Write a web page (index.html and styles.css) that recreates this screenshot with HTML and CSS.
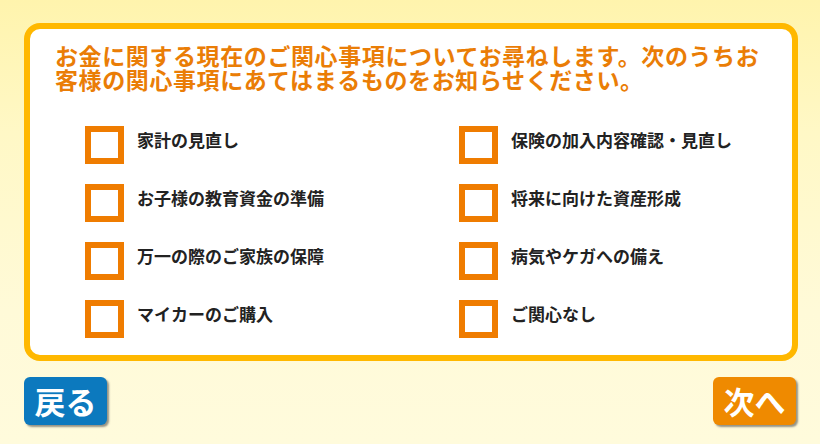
FILE: index.html
```html
<!DOCTYPE html>
<html lang="ja">
<head>
<meta charset="utf-8">
<title>ご関心事項</title>
<link rel="stylesheet" href="styles.css">
</head>
<body>
<div class="page">
  <section class="panel">
    <h1 class="title"><span class="title-line">お金に関する現在のご関心事項についてお尋ねします。次のうちお</span><span class="title-line">客様の関心事項にあてはまるものをお知らせください。</span></h1>
    <div class="options">
      <label class="option"><span class="box"></span><span class="text">家計の見直し</span></label>
      <label class="option"><span class="box"></span><span class="text">保険の加入内容確認・見直し</span></label>
      <label class="option"><span class="box"></span><span class="text">お子様の教育資金の準備</span></label>
      <label class="option"><span class="box"></span><span class="text">将来に向けた資産形成</span></label>
      <label class="option"><span class="box"></span><span class="text">万一の際のご家族の保障</span></label>
      <label class="option"><span class="box"></span><span class="text">病気やケガへの備え</span></label>
      <label class="option"><span class="box"></span><span class="text">マイカーのご購入</span></label>
      <label class="option"><span class="box"></span><span class="text">ご関心なし</span></label>
    </div>
  </section>
  <div class="actions">
    <button class="btn btn-back">戻る</button>
    <button class="btn btn-next">次へ</button>
  </div>
</div>
</body>
</html>
```

FILE: styles.css
```css
html, body {
  margin: 0;
  padding: 0;
}
body {
  width: 820px;
  height: 444px;
  overflow: hidden;
  font-family: "Noto Sans CJK JP", "Noto Sans", sans-serif;
  background: linear-gradient(180deg, #fff4ad 0%, #fff8c6 30%, #fffad8 70%, #fffbdc 100%);
}
.page {
  padding: 23px 22px 0 24px;
  display: flex;
  flex-direction: column;
}
.panel {
  box-sizing: border-box;
  height: 338px;
  background: #ffffff;
  border: 6px solid #ffb800;
  border-radius: 16px;
  padding: 14px 20px 0 25px;
}
.title {
  margin: 0;
  font-size: 23px;
  letter-spacing: 0.6px;
  font-weight: 700;
  color: #ea7d06;
  white-space: nowrap;
}
.title-line {
  display: block;
  height: 24px;
  line-height: 24px;
}
.options {
  margin: 35px 0 0 30px;
  display: grid;
  grid-template-columns: 374px 1fr;
  row-gap: 20px;
}
.option {
  display: flex;
  align-items: flex-start;
  gap: 13px;
}
.box {
  box-sizing: border-box;
  width: 39px;
  height: 38px;
  border: 6px solid #ef7c00;
  background: #fff;
  flex: none;
}
.text {
  margin-top: 4px;
  font-size: 17px;
  line-height: 20px;
  font-weight: 700;
  color: #222222;
  white-space: nowrap;
}
.actions {
  margin-top: 16px;
  padding-right: 2px;
  display: flex;
  justify-content: space-between;
}
.btn {
  width: 83px;
  height: 48px;
  border: none;
  border-radius: 6px;
  color: #ffffff;
  font-family: "Noto Sans CJK JP", sans-serif;
  font-size: 31px;
  font-weight: 700;
  line-height: 48px;
  padding: 0;
  box-shadow: 2px 2px 2px rgba(60, 60, 60, 0.55);
}
.btn-back {
  background: #0c79be;
}
.btn-next {
  background: #ef8a00;
}
```
